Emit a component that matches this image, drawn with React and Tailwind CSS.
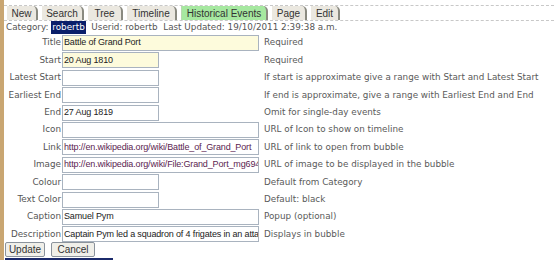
import React from 'react';

const tabs = [
  { label: 'New', w: 'w-[31px]' },
  { label: 'Search', w: 'w-[42px]' },
  { label: 'Tree', w: 'w-[35px]' },
  { label: 'Timeline', w: 'w-[50px]' },
  { label: 'Historical Events', w: 'w-[87px]', active: true },
  { label: 'Page', w: 'w-[35px]' },
  { label: 'Edit', w: 'w-[29px]' },
];

const rows = [
  { label: 'Title', value: 'Battle of Grand Port', long: true, req: true, help: 'Required' },
  { label: 'Start', value: '20 Aug 1810', req: true, help: 'Required' },
  { label: 'Latest Start', value: '', help: 'If start is approximate give a range with Start and Latest Start' },
  { label: 'Earliest End', value: '', help: 'If end is approximate, give a range with Earliest End and End' },
  { label: 'End', value: '27 Aug 1819', help: 'Omit for single-day events' },
  { label: 'Icon', value: '', long: true, help: 'URL of Icon to show on timeline' },
  { label: 'Link', value: 'http://en.wikipedia.org/wiki/Battle_of_Grand_Port', long: true, url: true, help: 'URL of link to open from bubble' },
  { label: 'Image', value: 'http://en.wikipedia.org/wiki/File:Grand_Port_mg6948.jpg', long: true, url: true, help: 'URL of image to be displayed in the bubble' },
  { label: 'Colour', value: '', help: 'Default from Category' },
  { label: 'Text Color', value: '', help: 'Default: black' },
  { label: 'Caption', value: 'Samuel Pym', long: true, help: 'Popup (optional)' },
  { label: 'Description', value: 'Captain Pym led a squadron of 4 frigates in an attack', long: true, help: 'Displays in bubble' },
];

const verdana = { fontFamily: '"DejaVu Sans", Verdana, sans-serif' };

function Field({ row }) {
  return (
    <div className="flex items-center h-[17.4px]">
      <div className="w-[58px] text-right pr-[1px] text-[8.8px] text-[#555] whitespace-nowrap">{row.label}</div>
      <div className="w-[202px] shrink-0">
        <div
          className={`${row.long ? 'w-[197px]' : 'w-[97px]'} h-[16px] border border-[#a9b3bf] ${row.req ? 'bg-[#fdfbdc]' : 'bg-white'} overflow-hidden flex items-center pl-[1px] font-['Liberation_Sans',Arial,sans-serif] text-[9px] tracking-[-0.15px] whitespace-nowrap ${row.url ? 'text-[#5b2450]' : 'text-[#222]'}`}
        >
          {row.value}
        </div>
      </div>
      <div className="text-[8.8px] text-[#5a5a5a] whitespace-nowrap">{row.help}</div>
    </div>
  );
}

export default function App() {
  return (
    <div className="w-[554px] h-[260px] bg-white flex overflow-hidden" style={verdana}>
      <div className="w-[4px] bg-[#c9a672] shrink-0" />
      <div className="flex-1 flex flex-col">
        <div className="h-[7px] border-b border-dashed border-[#c8c8c8]" />
        <div className="flex h-[15px] pl-[3px] gap-[4px] border-b border-dashed border-[#c8c8c8]">
          {tabs.map((t) => (
            <div
              key={t.label}
              className={`${t.w} h-[14px] flex items-center justify-center rounded-tr-[5px] border-r-2 border-[#8a8a80] font-['Liberation_Sans',Arial,sans-serif] text-[10px] text-[#333] ${t.active ? 'bg-[#a6e8a0] border-l border-l-[#b8d8b0]' : 'bg-[#ebe8e0]'}`}
            >
              {t.label}
            </div>
          ))}
        </div>
        <div className="h-[15px] flex items-center pl-[2px] text-[8.8px] text-[#555] whitespace-nowrap">
          <span>Category:&nbsp;</span>
          <span className="bg-[#0a1f6a] text-white px-[1px]">robertb</span>
          <span>&nbsp; Userid: robertb&nbsp; Last Updated: 19/10/2011 2:39:38 a.m.</span>
        </div>
        <div className="flex flex-col">
          {rows.map((r) => (
            <Field key={r.label} row={r} />
          ))}
        </div>
        <div className="flex gap-[6px] pl-[1px] mt-[-1px]">
          <button className="w-[40px] h-[15px] border border-[#8b939c] rounded-[2px] bg-[#f0efe9] text-[10px] text-[#333] flex items-center justify-center font-['Liberation_Sans',Arial,sans-serif]">Update</button>
          <button className="w-[44px] h-[15px] border border-[#8b939c] rounded-[2px] bg-[#f0efe9] text-[10px] text-[#333] flex items-center justify-center font-['Liberation_Sans',Arial,sans-serif]">Cancel</button>
        </div>
        <div className="ml-[1px] mt-[1px] w-[108px] border-t-2 border-[#1b2a6b]" />
      </div>
    </div>
  );
}
